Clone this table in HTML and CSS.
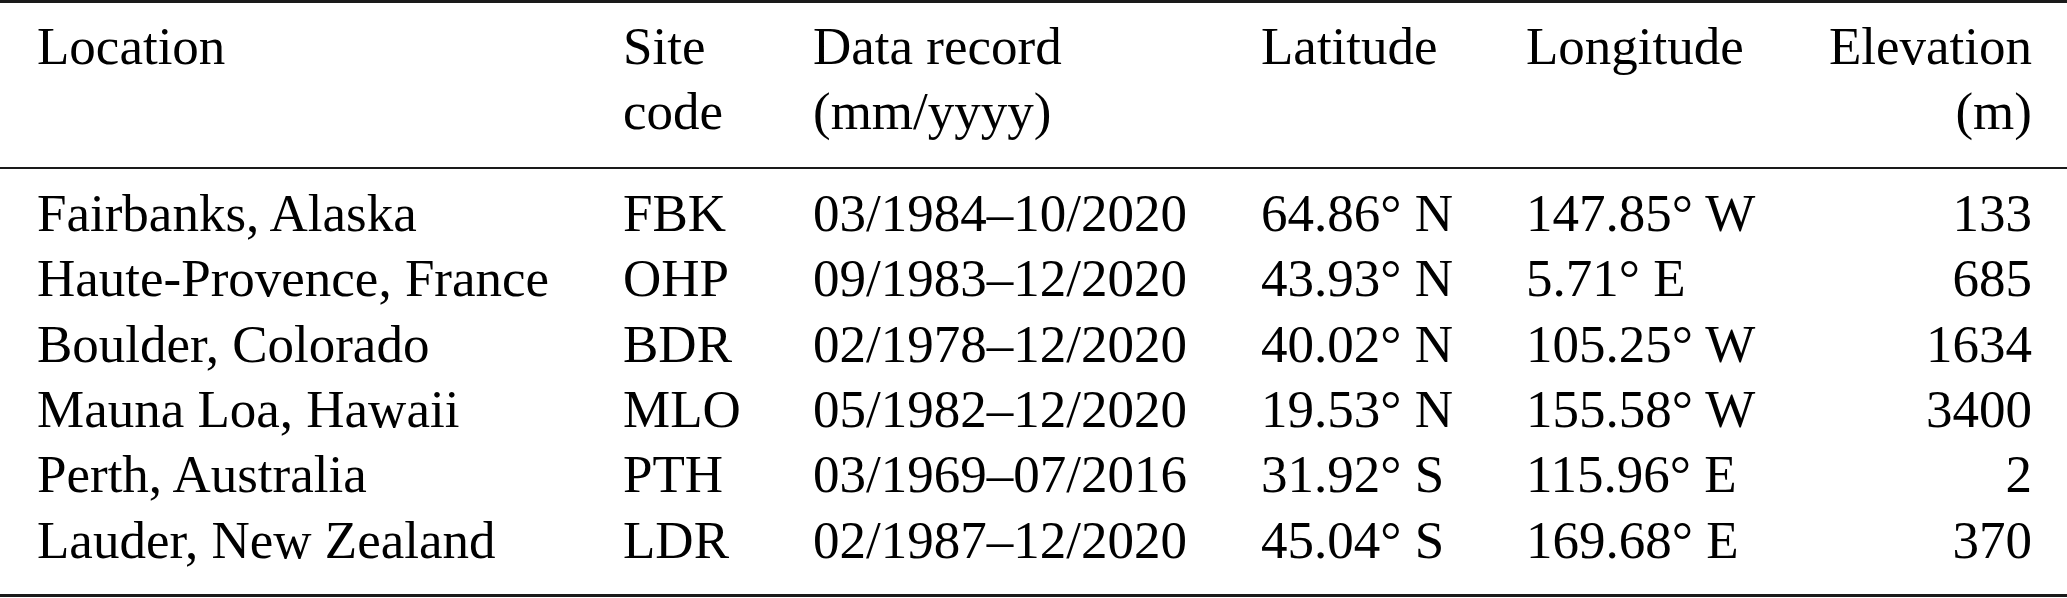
FILE: index.html
```html
<!DOCTYPE html>
<html lang="en">
<head>
    <meta charset="UTF-8">
    <title>Ozone lidar sites</title>
    <link rel="stylesheet" href="styles.css">
</head>
<body>
    <table class="site-table">
        <colgroup>
            <col class="col-location">
            <col class="col-code">
            <col class="col-record">
            <col class="col-lat">
            <col class="col-lon">
            <col class="col-elev">
        </colgroup>
        <thead>
            <tr>
                <th>Location</th>
                <th>Site<br>code</th>
                <th>Data record<br>(mm/yyyy)</th>
                <th>Latitude</th>
                <th>Longitude</th>
                <th class="num">Elevation<br>(m)</th>
            </tr>
        </thead>
        <tbody>
            <tr>
                <td>Fairbanks, Alaska</td>
                <td>FBK</td>
                <td>03/1984–10/2020</td>
                <td>64.86° N</td>
                <td>147.85° W</td>
                <td class="num">133</td>
            </tr>
            <tr>
                <td>Haute-Provence, France</td>
                <td>OHP</td>
                <td>09/1983–12/2020</td>
                <td>43.93° N</td>
                <td>5.71° E</td>
                <td class="num">685</td>
            </tr>
            <tr>
                <td>Boulder, Colorado</td>
                <td>BDR</td>
                <td>02/1978–12/2020</td>
                <td>40.02° N</td>
                <td>105.25° W</td>
                <td class="num">1634</td>
            </tr>
            <tr>
                <td>Mauna Loa, Hawaii</td>
                <td>MLO</td>
                <td>05/1982–12/2020</td>
                <td>19.53° N</td>
                <td>155.58° W</td>
                <td class="num">3400</td>
            </tr>
            <tr>
                <td>Perth, Australia</td>
                <td>PTH</td>
                <td>03/1969–07/2016</td>
                <td>31.92° S</td>
                <td>115.96° E</td>
                <td class="num">2</td>
            </tr>
            <tr>
                <td>Lauder, New Zealand</td>
                <td>LDR</td>
                <td>02/1987–12/2020</td>
                <td>45.04° S</td>
                <td>169.68° E</td>
                <td class="num">370</td>
            </tr>
        </tbody>
    </table>
</body>
</html>
```

FILE: styles.css
```css
/* booktabs-like table */
body {
    margin: 0;
    background-color: #fff;
    color: #000;
    font-family: "Liberation Serif", "Times New Roman", serif;
}

.site-table {
    width: 2067px;
    table-layout: fixed;
    border-collapse: collapse;
    font-size: 53px;
    line-height: 65.4px;
    border-top: 3px solid #1a1a1a;
    border-bottom: 3px solid #1a1a1a;
}

.col-location { width: 623px; }
.col-code { width: 190px; }
.col-record { width: 448px; }
.col-lat { width: 265px; }
.col-lon { width: 300px; }
.col-elev { width: 241px; }

.site-table th,
.site-table td {
    padding: 0;
    text-align: left;
    font-weight: normal;
    white-space: nowrap;
    vertical-align: top;
}

.site-table th:first-child,
.site-table td:first-child {
    padding-left: 37px;
}

.site-table .num {
    text-align: right;
    padding-right: 35px;
}

.site-table thead tr {
    border-bottom: 2px solid #1a1a1a;
}

.site-table thead th {
    padding-top: 11px;
    padding-bottom: 22px;
}

.site-table tbody tr:first-child td {
    padding-top: 12px;
}

.site-table tbody tr:last-child td {
    padding-bottom: 21px;
}
```
